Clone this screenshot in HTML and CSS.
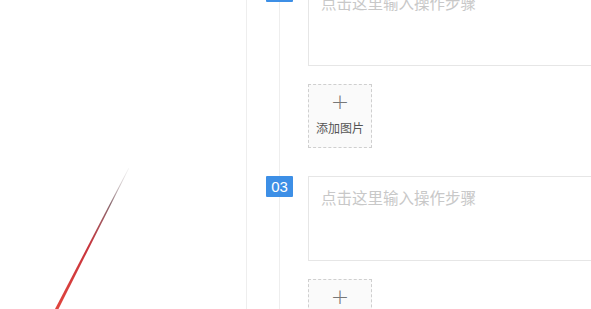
FILE: index.html
```html
<!DOCTYPE html>
<html lang="zh-CN">
<head>
    <meta charset="UTF-8">
    <meta name="viewport" content="width=device-width, initial-scale=1.0">
    <title>操作步骤</title>
    <link rel="stylesheet" href="styles.css">
</head>
<body>
    <div class="page">
        <aside class="side">
            <svg class="side-art" width="246" height="309" viewBox="0 0 246 309">
                <defs>
                    <linearGradient id="stroke" x1="128" y1="168" x2="55" y2="309" gradientUnits="userSpaceOnUse">
                        <stop offset="0" stop-color="#d8d8d8" stop-opacity="0.3"/>
                        <stop offset="0.25" stop-color="#8a6a70"/>
                        <stop offset="0.55" stop-color="#c8343c"/>
                        <stop offset="1" stop-color="#e0453e"/>
                    </linearGradient>
                </defs>
                <polygon points="128.5,168 129,168.5 58,310 54.5,310" fill="url(#stroke)"/>
            </svg>
        </aside>
        <main class="main">
            <div class="steps">
                <div class="step">
                    <span class="step-num">02</span>
                    <div class="step-body">
                        <textarea class="step-text" placeholder="点击这里输入操作步骤"></textarea>
                        <div class="upload">
                            <span class="upload-plus">+</span>
                            <span class="upload-label">添加图片</span>
                        </div>
                    </div>
                </div>
                <div class="step">
                    <span class="step-num">03</span>
                    <div class="step-body">
                        <textarea class="step-text" placeholder="点击这里输入操作步骤"></textarea>
                        <div class="upload">
                            <span class="upload-plus">+</span>
                            <span class="upload-label">添加图片</span>
                        </div>
                    </div>
                </div>
            </div>
        </main>
    </div>
</body>
</html>
```

FILE: styles.css
```css
body {
    margin: 0;
    padding: 0;
    background-color: #fff;
    font-family: "Liberation Sans", "Noto Sans CJK SC", sans-serif;
    overflow: hidden;
}
.page {
    display: flex;
    height: 309px;
    overflow: hidden;
}
.side {
    width: 246px;
    flex-shrink: 0;
    border-right: 1px solid #eee;
}
.side-art {
    display: block;
}
.main {
    flex: 1;
    overflow: hidden;
}
.steps {
    position: relative;
    margin-top: -19px;
    padding-left: 19px;
}
.steps::before {
    content: "";
    position: absolute;
    left: 32px;
    top: 0;
    bottom: -200px;
    width: 1px;
    background-color: #eee;
}
.step {
    position: relative;
    display: flex;
    align-items: flex-start;
    margin-bottom: 28px;
}
.step-num {
    width: 27px;
    height: 21px;
    line-height: 21px;
    flex-shrink: 0;
    text-align: center;
    background-color: #3d8fe6;
    color: #fff;
    font-size: 15px;
    border-radius: 1px;
}
.step-body {
    margin-left: 15px;
    min-width: 420px;
}
.step-text {
    display: block;
    box-sizing: border-box;
    width: 420px;
    height: 85px;
    padding: 9px 12px;
    border: 1px solid #e6e6e6;
    resize: none;
    outline: none;
    font-family: "Noto Sans CJK SC", sans-serif;
    font-size: 15.5px;
    color: #333;
}
.step-text::placeholder {
    color: #c8c8c8;
}
.upload {
    box-sizing: border-box;
    width: 64px;
    height: 64px;
    margin-top: 18px;
    border: 1px dashed #cfcfcf;
    background-color: #fafafa;
    display: flex;
    flex-direction: column;
    align-items: center;
    color: #555;
}
.upload-plus {
    margin-top: 5px;
    font-size: 22px;
    line-height: 24px;
    font-weight: 300;
    color: #777;
    font-family: "DejaVu Sans", sans-serif;
}
.upload-label {
    margin-top: 6px;
    font-size: 12px;
    line-height: 16px;
    font-family: "Noto Sans CJK SC", sans-serif;
}
```
